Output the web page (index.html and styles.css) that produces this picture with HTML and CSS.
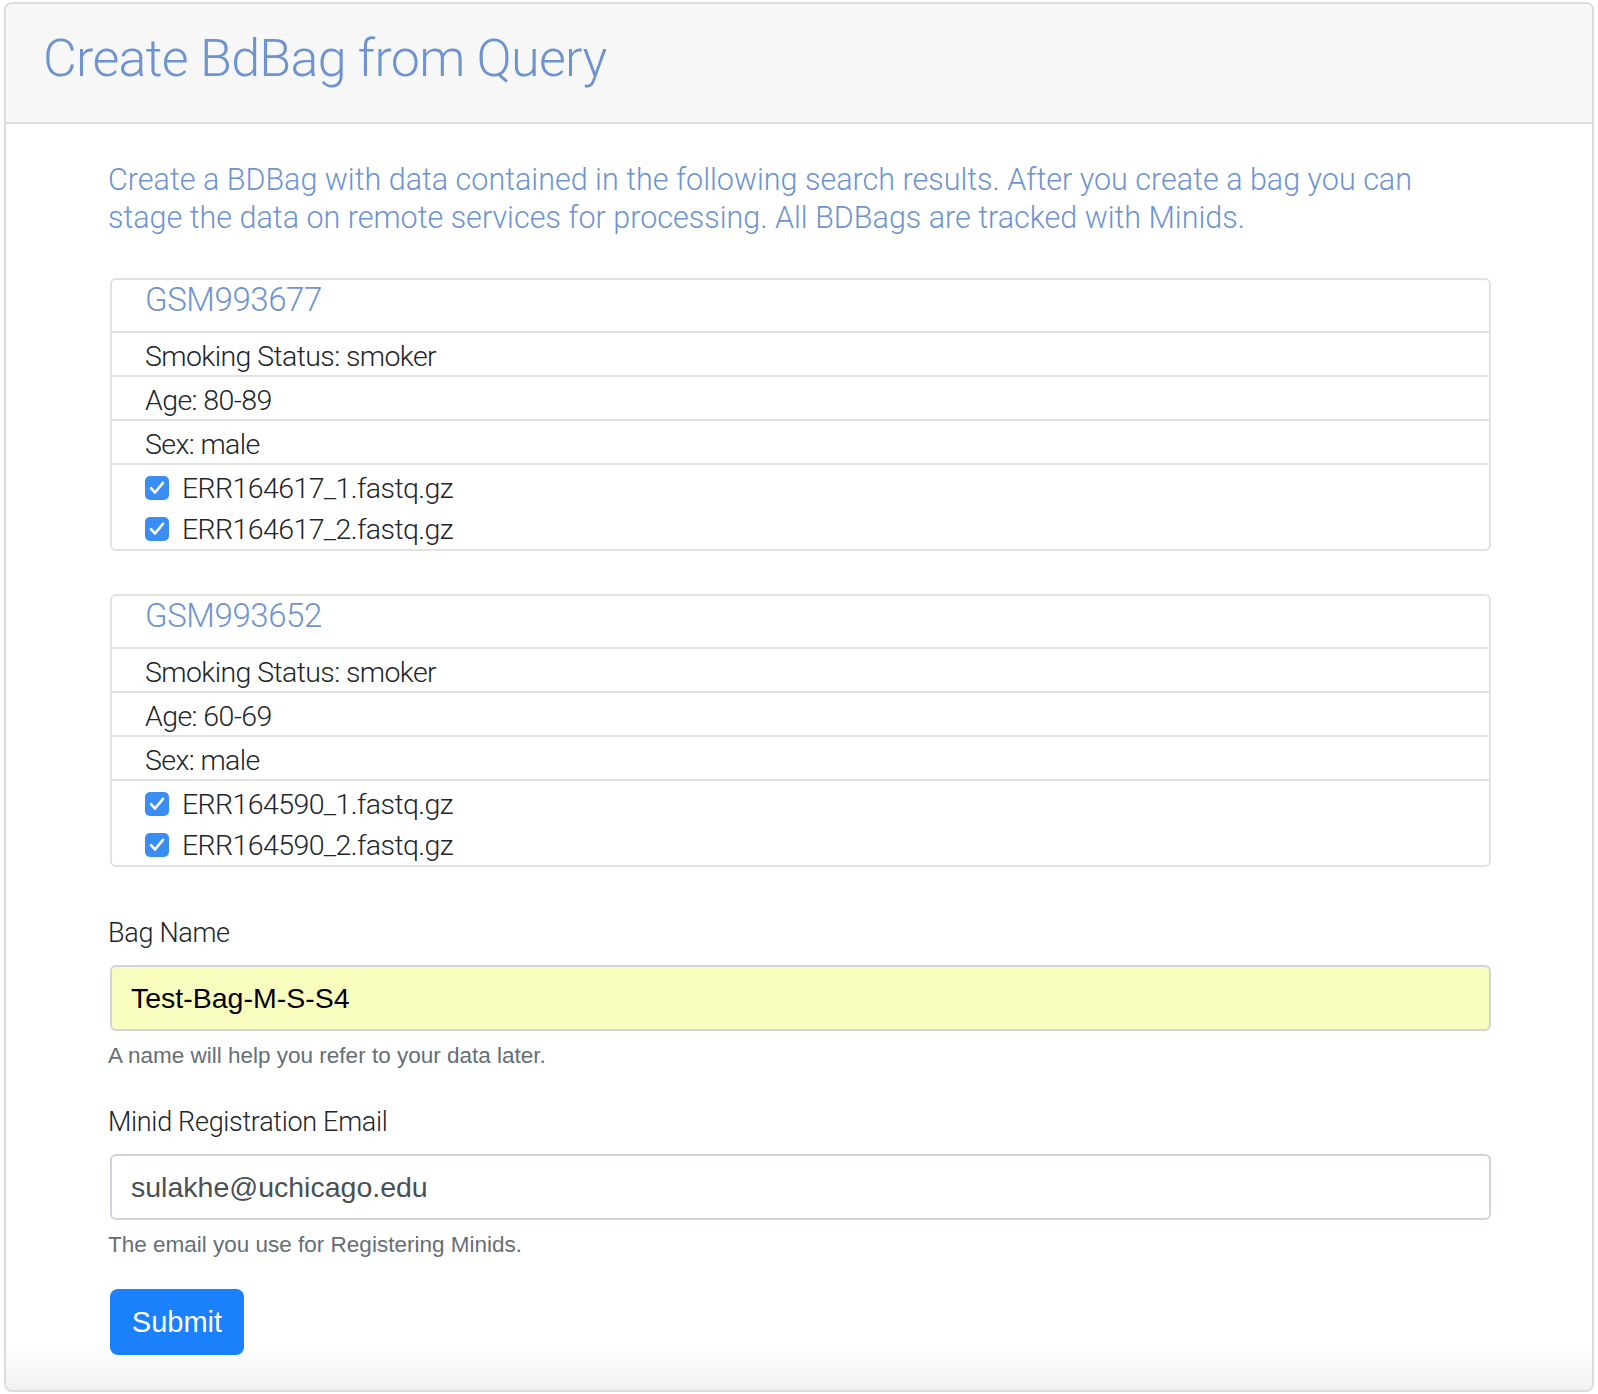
FILE: index.html
```html
<!DOCTYPE html>
<html lang="en">
<head>
<meta charset="utf-8">
<title>Create BdBag from Query</title>
<link rel="stylesheet" href="styles.css">
</head>
<body>
<div class="card">
  <div class="card-header">
    <h1 class="title">Create BdBag from Query</h1>
  </div>
  <div class="card-body">
    <p class="lead">Create a BDBag with data contained in the following search results. After you create a bag you can stage the data on remote services for processing. All BDBags are tracked with Minids.</p>

    <div class="panel">
      <div class="panel-heading">GSM993677</div>
      <div class="row">Smoking Status: smoker</div>
      <div class="row">Age: 80-89</div>
      <div class="row">Sex: male</div>
      <div class="files">
        <label class="file"><svg class="check" viewBox="0 0 24 24" width="24" height="24"><rect x="0" y="0" width="24" height="24" rx="5" fill="#3a8ef3"/><path d="M6 12.2 L10 16.5 L18 6.8" fill="none" stroke="#fff" stroke-width="2.6" stroke-linecap="round" stroke-linejoin="round"/></svg><span>ERR164617_1.fastq.gz</span></label>
        <label class="file"><svg class="check" viewBox="0 0 24 24" width="24" height="24"><rect x="0" y="0" width="24" height="24" rx="5" fill="#3a8ef3"/><path d="M6 12.2 L10 16.5 L18 6.8" fill="none" stroke="#fff" stroke-width="2.6" stroke-linecap="round" stroke-linejoin="round"/></svg><span>ERR164617_2.fastq.gz</span></label>
      </div>
    </div>

    <div class="panel">
      <div class="panel-heading">GSM993652</div>
      <div class="row">Smoking Status: smoker</div>
      <div class="row">Age: 60-69</div>
      <div class="row">Sex: male</div>
      <div class="files">
        <label class="file"><svg class="check" viewBox="0 0 24 24" width="24" height="24"><rect x="0" y="0" width="24" height="24" rx="5" fill="#3a8ef3"/><path d="M6 12.2 L10 16.5 L18 6.8" fill="none" stroke="#fff" stroke-width="2.6" stroke-linecap="round" stroke-linejoin="round"/></svg><span>ERR164590_1.fastq.gz</span></label>
        <label class="file"><svg class="check" viewBox="0 0 24 24" width="24" height="24"><rect x="0" y="0" width="24" height="24" rx="5" fill="#3a8ef3"/><path d="M6 12.2 L10 16.5 L18 6.8" fill="none" stroke="#fff" stroke-width="2.6" stroke-linecap="round" stroke-linejoin="round"/></svg><span>ERR164590_2.fastq.gz</span></label>
      </div>
    </div>

    <form class="form">
      <div class="group">
        <label class="label" for="bagname">Bag Name</label>
        <input class="control autofill" id="bagname" type="text" value="Test-Bag-M-S-S4">
        <small class="help">A name will help you refer to your data later.</small>
      </div>
      <div class="group group-last">
        <label class="label" for="email">Minid Registration Email</label>
        <input class="control" id="email" type="email" value="sulakhe@uchicago.edu">
        <small class="help">The email you use for Registering Minids.</small>
      </div>
      <button class="btn" type="button">Submit</button>
    </form>
  </div>
</div>
</body>
</html>
```

FILE: styles.css
```css
html, body {
  margin: 0;
  padding: 0;
  background: #ffffff;
}

body {
  padding: 2px 4px 2px 4px;
  font-family: Roboto, "Liberation Sans", Arial, sans-serif;
  color: #212529;
}

.card {
  box-sizing: border-box;
  width: 1590px;
  height: 1390px;
  border: 2px solid #dcdcdc;
  border-radius: 8px;
  overflow: hidden;
  display: flex;
  flex-direction: column;
}

.card-header {
  background: #f7f7f7;
  border-bottom: 2px solid #dcdcdc;
  padding: 24px 37px 32px;
}

.title {
  margin: 0;
  font-family: Roboto, "Liberation Sans", sans-serif;
  font-weight: 300;
  font-size: 52px;
  line-height: 62px;
  letter-spacing: -0.7px;
  color: #6d94d1;
}

.card-body {
  flex: 1;
  padding: 37px 101px 0 102px;
  background: linear-gradient(to bottom, #ffffff calc(100% - 46px), #f1f1f1 100%);
}

.lead {
  margin: 0 0 41px;
  max-width: 1330px;
  font-weight: 300;
  font-size: 30.5px;
  line-height: 38px;
  color: #6d94d1;
}

.panel {
  border: 2px solid #e2e2e2;
  border-radius: 6px;
  margin: 0 0 43px 2px;
}

.panel + .panel {
  margin-bottom: 45px;
}

.panel-heading {
  padding: 0 33px 11px;
  font-weight: 300;
  font-size: 33px;
  line-height: 40px;
  letter-spacing: -0.4px;
  color: #6d94d1;
  border-bottom: 2px solid #e2e2e2;
}

.row {
  padding: 5px 33px 0;
  font-size: 28.5px;
  line-height: 37px;
  letter-spacing: -0.6px;
  font-weight: 300;
  color: #212529;
  border-bottom: 2px solid #e2e2e2;
}

.files {
  padding: 2px 33px 0;
}

.file {
  display: flex;
  align-items: center;
  gap: 13px;
  font-size: 28.5px;
  line-height: 41px;
  letter-spacing: -0.6px;
  font-weight: 300;
  color: #212529;
}

.file span {
  position: relative;
  top: 1px;
}

.check {
  flex: none;
  display: block;
}

.form {
  margin: 0;
}

.group {
  display: flex;
  flex-direction: column;
  margin-bottom: 29px;
}

.group-last {
  margin-bottom: 28px;
}

.label {
  font-size: 27px;
  line-height: 42px;
  letter-spacing: -0.3px;
  font-weight: 300;
  color: #212529;
  margin-bottom: 11px;
}

.control {
  box-sizing: border-box;
  margin: 0 0 0 2px;
  height: 66px;
  border: 2px solid #ced4da;
  border-radius: 6px;
  padding: 0 19px;
  font-family: "Liberation Sans", Arial, sans-serif;
  font-size: 28.5px;
  color: #495057;
  background: #ffffff;
  outline: none;
}

.control.autofill {
  background: #f9fcbf;
  color: #000000;
}

.help {
  margin-top: 9px;
  font-family: "Liberation Sans", Arial, sans-serif;
  font-size: 22.5px;
  line-height: 32px;
  color: #666e75;
}

.btn {
  margin-left: 2px;
  width: 134px;
  height: 66px;
  border: none;
  border-radius: 8px;
  background: #1a80fb;
  color: #ffffff;
  font-family: "Liberation Sans", Arial, sans-serif;
  font-size: 29px;
  padding: 0;
  cursor: pointer;
}
```
